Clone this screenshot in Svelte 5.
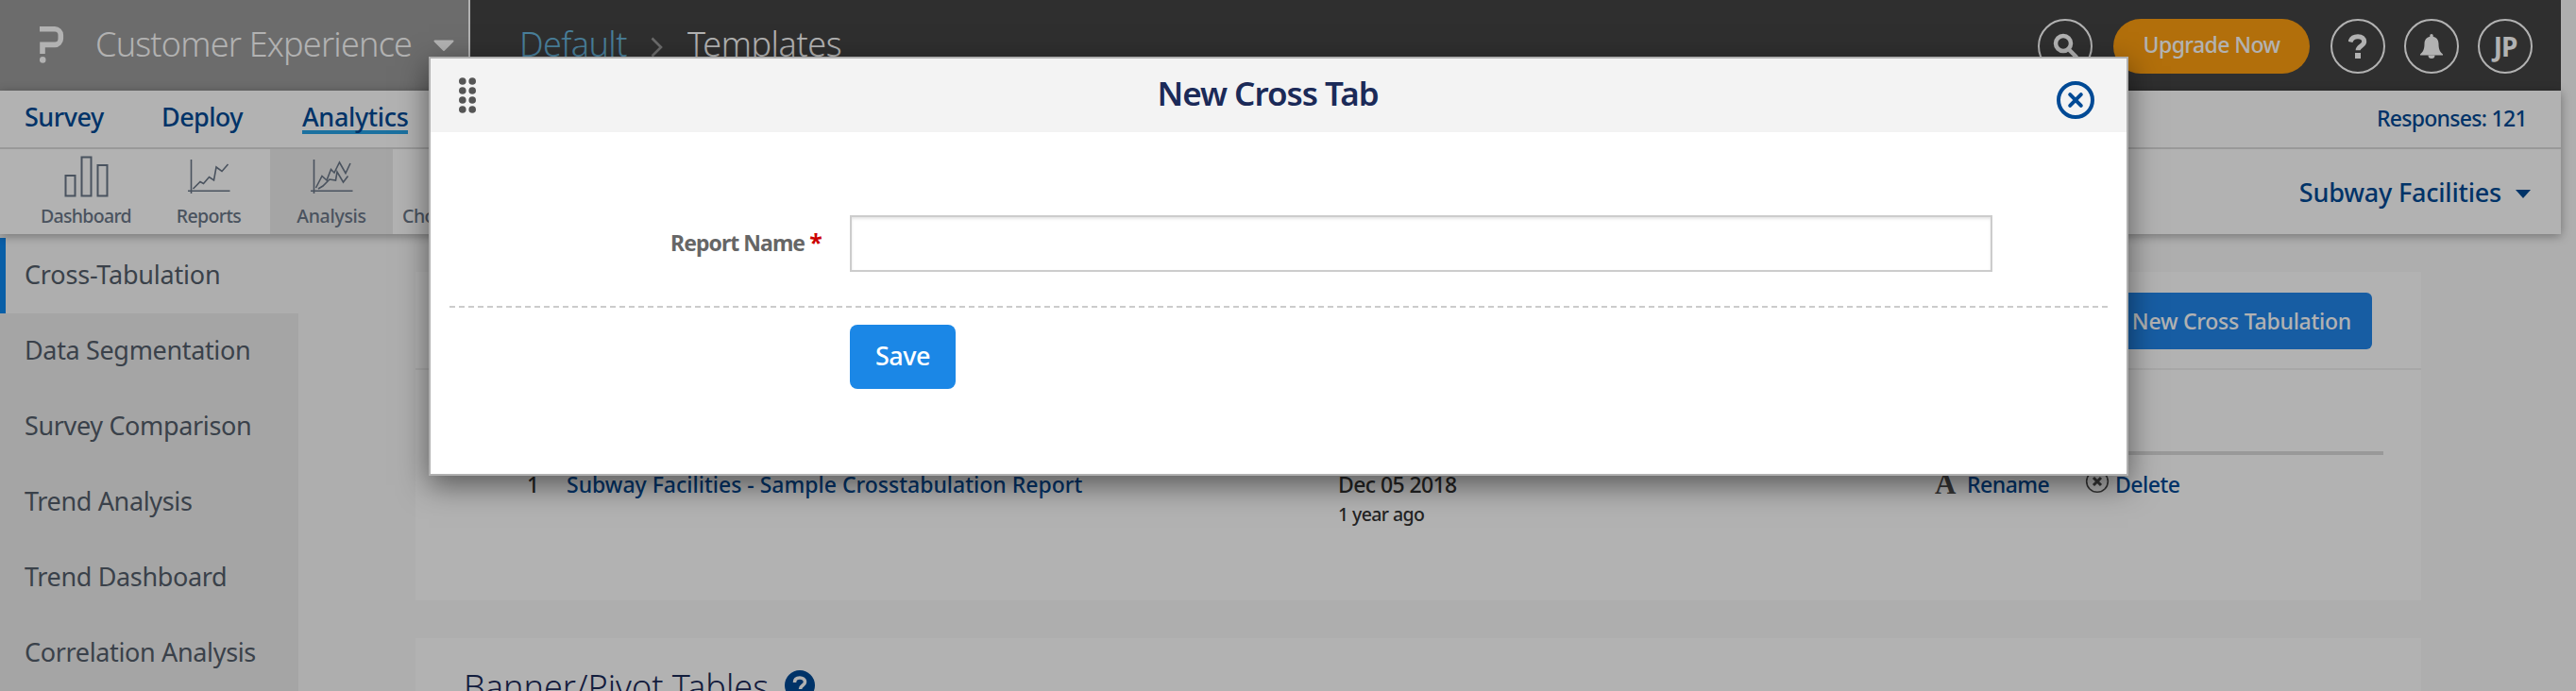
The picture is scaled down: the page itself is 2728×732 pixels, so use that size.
<script lang="ts">
  const sections = [
    { name: 'Survey', cls: 'survey' },
    { name: 'Deploy', cls: 'deploy' },
    { name: 'Analytics', cls: 'analytics' },
  ];

  const reports = ['Cross-Tabulation', 'Data Segmentation', 'Survey Comparison', 'Trend Analysis', 'Trend Dashboard', 'Correlation Analysis'];

  let section = $state('Analytics');
  let report = $state('Cross-Tabulation');
  let open = $state(true);
  let name = $state('');
</script>

<div class="page">
  <header class="topbar">
    <button class="product">
      <svg class="logo" width="26" height="40" viewBox="0 0 26 40" fill="none">
        <path d="M0 2.8h16a6.3 6.3 0 0 1 6.3 6.3v4a6.3 6.3 0 0 1-6.3 6.3H3v9.6" stroke="#fff" stroke-width="5.6" />
        <circle cx="3.2" cy="35.4" r="3.3" fill="#fff" />
      </svg>
      <span class="product-name">Customer Experience</span>
      <svg class="product-caret" width="22" height="13" viewBox="0 0 22 13"><path d="M1.5 1.5h19L11 11z" fill="#fff" stroke="#fff" stroke-width="2" stroke-linejoin="round" /></svg>
    </button>
    <nav class="crumbs">
      <a class="crumb-link" href="#default">Default</a>
      <svg width="13" height="22" viewBox="0 0 13 22" fill="none" stroke="#9a9a9a" stroke-width="2.6"><path d="M1.5 1.5L11 11l-9.500 9.500" /></svg>
      <span class="crumb-current">Templates</span>
    </nav>
    <div class="tools">
      <button class="round" aria-label="Search">
        <svg width="28" height="28" viewBox="0 0 28 28" fill="none" stroke="#fff" stroke-width="4.500"><circle cx="12" cy="11" r="8" /><path d="M17.500 17l8 8" stroke-linecap="round" /></svg>
      </button>
      <button class="upgrade">Upgrade Now</button>
      <div class="round-group">
        <button class="round" aria-label="Help">
          <svg width="20" height="26" viewBox="0 0 20 26" fill="none"><path d="M2 8.500C3 4.500 6 2.700 10 2.700c4.200 0 6.700 2 6.700 5.300 0 4.500-6.600 4.800-6.600 9.200" stroke="#fff" stroke-width="5" /><path d="M7 20h6v6H7z" fill="#fff" /></svg>
        </button>
        <button class="round" aria-label="Notifications">
          <svg width="24" height="26" viewBox="0 0 24 26" fill="#fff"><path d="M12 0c1 0 1.700.8 1.700 1.800v.9c3.700.8 5.800 3.600 5.800 7.600 0 6.200 1.500 8.700 4.500 11.200v1H0v-1c3-2.500 4.500-5 4.500-11.200 0-4 2.100-6.800 5.800-7.600v-.9C10.300.8 11 0 12 0z" /><path d="M8.500 22.500h7a3.500 3.500 0 0 1-7 0z" /></svg>
        </button>
        <button class="round initials">JP</button>
      </div>
    </div>
  </header>

  <div class="subheader">
    <div class="sections">
      {#each sections as s}
        <button class="section {s.cls}" class:active={section === s.name} onclick={() => (section = s.name)}>{s.name}</button>
      {/each}
      <span class="responses">Responses: 121</span>
    </div>
    <div class="tabs">
      <button class="tab">
        <svg width="48" height="48" viewBox="0 0 48 48" fill="none" stroke="currentColor" stroke-width="2"><path d="M2.500 24h10v21.500h-10zM19.500 4.500h10v41h-10zM36.500 13h10v32.500h-10z" /></svg>
        <span class="t-dashboard">Dashboard</span>
      </button>
      <button class="tab">
        <svg width="48" height="48" viewBox="0 0 48 48" fill="none" stroke="currentColor" stroke-width="1.600"><path d="M5.500 7v36M2 40.200h44.500M7.500 38l7.500-7.500 3.500 2 6-7 5 3.500 2.500-14 6 4.500 6.500-7.500" /></svg>
        <span class="t-reports">Reports</span>
      </button>
      <button class="tab active">
        <svg width="48" height="48" viewBox="0 0 48 48" fill="none" stroke="currentColor" stroke-width="1.600"><path d="M5.500 7v36M2 40.200h44.500M7.500 37l6.500-12.500 5 4.500 4.500-11.500 3.500 3.500 5.500-11 6.500 11.500 5-10.500M10 38l5-3 7-7 6.500 1 1.500-9 6.500 11 5-6.500" /></svg>
        <span class="t-analysis">Analysis</span>
      </button>
      <button class="tab choice"><span>Choice Modelling</span></button>
      <button class="survey-picker">
        Subway Facilities
        <svg width="16" height="9" viewBox="0 0 16 9"><path d="M0 0h16l-8 9z" fill="currentColor" /></svg>
      </button>
    </div>
  </div>

  <div class="body">
    <aside class="sidebar">
      {#each reports as r}
        <button class="side-item" class:active={report === r} onclick={() => (report = r)}>{r}</button>
      {/each}
    </aside>
    <main class="content">
      <section class="card crosstabs">
        <div class="card-head">
          <button class="new-btn" onclick={() => (open = true)}>New Cross Tabulation</button>
        </div>
        <div class="table">
          <div class="table-head"></div>
          <div class="row">
            <span class="num">1</span>
            <a class="title" href="#report">Subway Facilities - Sample Crosstabulation Report</a>
            <div class="date">
              <span>Dec 05 2018</span>
              <span class="ago">1 year ago</span>
            </div>
            <a class="action rename" href="#rename"><span class="letter">A</span>Rename</a>
            <a class="action delete" href="#delete">
              <svg width="26" height="26" viewBox="0 0 26 26" fill="none" stroke="#4c4c4c"><circle cx="13" cy="12" r="11.300" stroke-width="1.600" /><path d="M9 8l8 8M17 8l-8 8" stroke-width="3" /></svg>
              Delete
            </a>
          </div>
        </div>
      </section>
      <section class="card banners">
        <h2>Banner/Pivot Tables</h2>
        <svg width="32" height="32" viewBox="0 0 32 32" fill="none"><circle cx="16" cy="16" r="16" fill="#004a95" /><path d="M10.500 13c0-3.500 2.500-5 5.500-5s5.500 1.700 5.500 4.500c0 3.500-5 3.500-5 7.500" stroke="#fff" stroke-width="3.600" /><path d="M14.500 22.500h4v4h-4z" fill="#fff" /></svg>
      </section>
    </main>
  </div>

  <div class="overlay"></div>

  {#if open}
    <div class="modal" role="dialog" aria-modal="true" aria-label="New Cross Tab">
      <div class="modal-header">
        <svg class="grip" width="18" height="38" viewBox="0 0 18 38" fill="#555">
          {#each [4, 14, 24, 34] as y}
            <circle cx="3.800" cy={y} r="3.800" />
            <circle cx="14.200" cy={y} r="3.800" />
          {/each}
        </svg>
        <h1>New Cross Tab</h1>
        <button class="close" aria-label="Close" onclick={() => (open = false)}>
          <svg width="40" height="40" viewBox="0 0 40 40" fill="none" stroke="#004a95" stroke-width="4"><circle cx="20" cy="20" r="18" /><path d="M14.200 14.200l11.600 11.600M25.800 14.200L14.200 25.800" stroke-linecap="round" /></svg>
        </button>
      </div>
      <div class="field">
        <label for="report-name">Report Name <span class="required">*</span></label>
        <input id="report-name" type="text" bind:value={name} />
      </div>
      <svg class="divider" width="1756" height="2"><path d="M0 1h1756" stroke="#ccc" stroke-width="2" stroke-dasharray="6 4" /></svg>
      <button class="save">Save</button>
    </div>
  {/if}
</div>

<style>
  :global(body) {
    background: #f9f9f9;
    overflow: hidden;
  }

  .page {
    position: relative;
    height: 732px;
    overflow: hidden;
    font-family: 'Noto Sans', 'Open Sans', sans-serif;
  }

  button {
    padding: 0;
    border: none;
    background: none;
    color: inherit;
    font-family: inherit;
    white-space: nowrap;
    cursor: pointer;
  }

  a { text-decoration: none; white-space: nowrap; }
  svg { display: block; flex: none; }

  .topbar {
    display: flex;
    width: 2712px;
    height: 96px;
    background: #444;
    color: #fff;
  }

  .product {
    display: flex;
    align-items: center;
    box-sizing: border-box;
    width: 498px;
    padding: 0 0 0 42px;
    border-right: 2px solid #fff;
    background: #9b9b9b;
  }

  .product-name {
    width: 337px;
    margin-left: 33px;
    padding-bottom: 3px;
    font-size: 36px;
    font-weight: 300;
    letter-spacing: -0.8px;
    text-align: left;
  }

  .product-caret { margin-left: 21px; }

  .crumbs {
    display: flex;
    align-items: center;
    padding: 0 0 3px 52px;
    font-size: 36px;
    font-weight: 300;
  }

  .crumb-link { width: 113px; margin-right: 26px; color: #69b6dd; letter-spacing: -0.6px; }
  .crumb-current { margin-left: 26px; letter-spacing: -0.4px; }
  .crumbs svg { margin-top: 7px; }

  .tools {
    display: flex;
    align-items: flex-start;
    gap: 22px;
    margin-left: auto;
    padding: 20px 30px 0 0;
  }

  .round-group { display: flex; gap: 20px; }

  .round {
    display: flex;
    align-items: center;
    justify-content: center;
    box-sizing: border-box;
    width: 58px;
    height: 58px;
    border: 2px solid #fff;
    border-radius: 50%;
  }

  .initials { font-size: 28px; font-weight: 700; letter-spacing: -1px; }

  .upgrade {
    width: 208px;
    height: 58px;
    padding-bottom: 4px;
    border-radius: 29px;
    background: #ff9f10;
    font-size: 23px;
    font-weight: 500;
    letter-spacing: -0.6px;
  }

  .subheader {
    position: relative;
    width: 2712px;
    background: #fff;
    box-shadow: 0 2px 10px rgba(0, 0, 0, 0.35);
  }

  .sections {
    display: flex;
    align-items: flex-start;
    height: 60px;
    padding: 0 36px 0 26px;
    border-bottom: 2px solid #dcdcdc;
    color: #004a95;
  }

  .section {
    margin-top: 13px;
    border-bottom: 4px solid transparent;
    font-size: 27px;
    font-weight: 500;
    line-height: 29px;
    text-align: left;
  }

  .section.active { border-color: #27a3e5; }
  .survey { width: 86px; letter-spacing: -0.5px; }
  .deploy { width: 88px; margin-left: 59px; letter-spacing: -0.6px; }
  .analytics { width: 112px; margin-left: 61px; letter-spacing: -0.35px; }

  .responses {
    margin: 15px 0 0 auto;
    font-size: 23px;
    font-weight: 500;
    line-height: 29px;
    letter-spacing: -0.7px;
  }

  .tabs {
    display: flex;
    height: 90px;
    padding: 0 32px 0 26px;
  }

  .tab {
    display: flex;
    flex-direction: column;
    align-items: center;
    width: 130px;
    padding-top: 4px;
    color: #6b7788;
    font-size: 19.5px;
    font-weight: 500;
    line-height: 24px;
  }

  .tab span { margin-top: 7px; }
  .tab.active { background: #ececec; }
  .t-dashboard { letter-spacing: -0.7px; }
  .t-reports { letter-spacing: -0.6px; }
  .t-analysis { letter-spacing: -0.3px; }
  .tab.choice { align-items: flex-start; justify-content: flex-end; padding: 0 0 7px 10px; letter-spacing: -0.5px; }

  .survey-picker {
    display: flex;
    align-items: center;
    gap: 15px;
    margin-left: auto;
    color: #004a95;
    font-size: 27px;
    font-weight: 500;
    letter-spacing: -0.2px;
  }

  .survey-picker svg { margin-top: 5px; }

  .body {
    display: flex;
    width: 2712px;
    padding-top: 4px;
  }

  .sidebar {
    display: flex;
    flex-direction: column;
    width: 316px;
    height: 480px;
  }

  .side-item {
    height: 80px;
    padding: 0 0 4px 26px;
    background: #ededed;
    color: #545e6b;
    font-size: 27px;
    letter-spacing: -0.35px;
    text-align: left;
  }

  .side-item.active {
    padding-left: 20px;
    border-left: 6px solid #0e88f0;
    background: none;
    letter-spacing: -0.2px;
  }

  .content {
    display: flex;
    flex-direction: column;
    gap: 40px;
    width: 2124px;
    margin: 36px 0 0 124px;
  }

  .card { background: #fff; }
  .crosstabs { height: 348px; }

  .card-head {
    display: flex;
    justify-content: flex-end;
    align-items: flex-start;
    box-sizing: border-box;
    height: 104px;
    padding: 22px 52px 0 0;
    border-bottom: 2px solid #efefef;
  }

  .new-btn {
    height: 60px;
    padding: 0 22px 0 40px;
    border-radius: 6px;
    background: #2186ea;
    color: #fff;
    font-size: 23px;
    font-weight: 500;
    letter-spacing: -0.25px;
  }

  .table { padding: 0 40px 0 52px; }
  .table-head { height: 86px; border-bottom: 4px solid #dcdcdc; }

  .row {
    display: grid;
    grid-template-columns: 42px 817px 632px 159px 1fr;
    padding: 16px 0 0 66px;
    color: #333;
    font-size: 23px;
    font-weight: 500;
    line-height: 30px;
  }

  .title { color: #004a95; }
  .date { display: flex; flex-direction: column; letter-spacing: -0.6px; }
  .ago { margin-top: 2px; font-size: 19.5px; letter-spacing: -0.6px; }
  .action { display: flex; color: #004a95; letter-spacing: -0.5px; }
  .action svg { margin-right: 6px; }

  .letter {
    width: 34px;
    color: #4c4c4c;
    font-family: 'Liberation Serif', serif;
    font-size: 31px;
    font-weight: 700;
  }

  .banners {
    display: flex;
    height: 200px;
    padding: 34px 0 0 51px;
    gap: 17px;
  }

  .banners h2 {
    margin: -7px 0 0;
    color: #1b2a58;
    font-size: 36px;
    font-weight: 300;
    line-height: 50px;
  }

  .overlay {
    position: absolute;
    inset: 0;
    background: rgba(0, 0, 0, 0.3);
  }

  .modal {
    position: absolute;
    left: 454px;
    top: 60px;
    box-sizing: border-box;
    width: 1800px;
    height: 444px;
    border: 2px solid #b0b0b0;
    background: #fff;
    box-shadow: 0 10px 30px rgba(0, 0, 0, 0.5);
  }

  .modal-header {
    display: flex;
    justify-content: space-between;
    align-items: flex-start;
    box-sizing: border-box;
    height: 78px;
    padding: 20px 34px 0 30px;
    background: #f3f3f3;
  }

  .modal-header h1 {
    margin: -7px 0 0 3px;
    color: #1b2a58;
    font-size: 35px;
    font-weight: 600;
    line-height: 48px;
    letter-spacing: -1px;
  }

  .close { margin-top: 4px; }

  .field {
    display: flex;
    align-items: center;
    margin: 88px 0 0 254px;
  }

  .field label {
    width: 190px;
    padding-bottom: 4px;
    color: #666;
    font-size: 23px;
    font-weight: 700;
    letter-spacing: -0.95px;
  }

  .required { color: #c00; font-size: 25px; }

  .field input {
    box-sizing: border-box;
    width: 1210px;
    height: 60px;
    padding: 0 12px;
    border: 2px solid #ccc;
    box-shadow: inset 0 2px 3px rgba(0, 0, 0, 0.1);
    font: 24px 'Noto Sans', sans-serif;
    outline: none;
  }

  .divider { margin: 36px 0 18px 20px; }

  .save {
    display: block;
    width: 112px;
    height: 68px;
    margin-left: 444px;
    padding-bottom: 4px;
    border-radius: 8px;
    background: #1b87e6;
    color: #fff;
    font-size: 27px;
    font-weight: 500;
    letter-spacing: -0.5px;
  }
</style>
